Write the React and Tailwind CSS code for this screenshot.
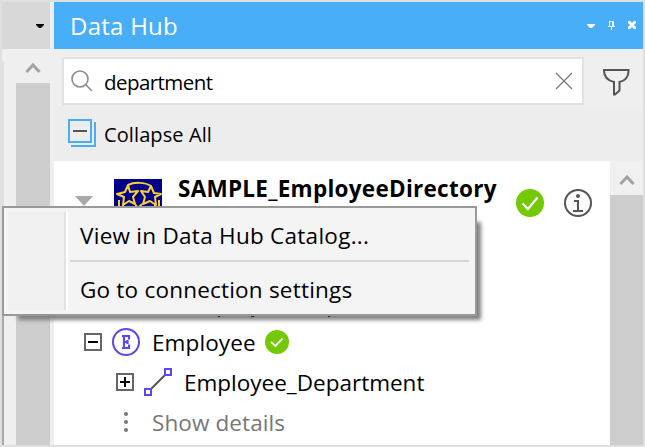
import React from "react";

const ArrowUp = () => (
  <svg width="16" height="12" viewBox="0 0 16 12" fill="none" stroke="#a3a3a3" strokeWidth="3">
    <path d="M1.500 10 8 3l6.500 7" />
  </svg>
);

const CheckBadge = ({ className, tick }) => (
  <svg className={className} viewBox="0 0 28 28" fill="none">
    <circle cx="14" cy="14" r="14" fill="#74c905" />
    <path d={tick} stroke="#fff" strokeWidth="2.200" />
  </svg>
);

function LeftPane() {
  return (
    <div className="flex w-[52px] shrink-0 flex-col bg-[#efefef]">
      <div className="flex h-[47px] w-12 items-center justify-end bg-[#d8d8d8] pr-1.5">
        <svg width="8" height="4" viewBox="0 0 8 4"><path d="M0 0h8v1L5 4H3L0 1z" fill="#000" /></svg>
      </div>
      <div className="flex min-h-0 flex-1">
        <div className="mt-3 flex w-0.5 flex-col justify-end bg-[#e0e0e0]">
          <div className="h-[129px] bg-[#a9a9a9]" />
        </div>
        <div className="ml-3 flex w-[34px] flex-col">
          <div className="flex h-[34px] items-center justify-center pt-1"><ArrowUp /></div>
          <div className="flex-1 bg-[#cdcdcd]" />
        </div>
      </div>
    </div>
  );
}

function TitleBar() {
  return (
    <div className="flex h-[47px] shrink-0 items-center bg-[#47aef7] pr-1.5 pl-4 text-white">
      <span className="flex-1 text-[24px] leading-[32px] tracking-[0.25px] whitespace-pre">Data Hub</span>
      <svg width="52" height="13" viewBox="0 0 52 13" fill="#fff">
        <path d="M2 5h8v1L7 9H5L2 6z" />
        <path fillRule="evenodd" d="M24 2h5v5h1v1h-3v3h-1V8h-3V7h1zm1 1v4h2V3z" />
        <path d="M43 2h2l2 2 2-2h2v2l-2 2 2 2v2h-2l-2-2-2 2h-2V8l2-2-2-2z" />
      </svg>
    </div>
  );
}

function SearchRow() {
  return (
    <div className="flex h-14 shrink-0 bg-[#efefef] pt-2 pl-2">
      <div className="flex h-12 w-[522px] items-center border-2 border-[#e2e2e2] bg-white pl-[7px]">
        <svg width="22" height="22" viewBox="0 0 22 22" fill="none" stroke="#8c8c8c" strokeWidth="1.600">
          <circle cx="9" cy="9" r="8" />
          <path d="m14.500 14.500 6.500 6.500" />
        </svg>
        <span className="ml-[11px] flex-1 pt-0.5 text-[20.5px] leading-[28px] tracking-[-0.55px] whitespace-pre text-black">department</span>
        <svg className="mr-[9px]" width="18" height="18" viewBox="0 0 18 18" stroke="#777" strokeWidth="1.200">
          <path d="m1 1 16 16M17 1 1 17" />
        </svg>
      </div>
      <svg className="mt-3 ml-[18px]" width="28" height="28" viewBox="0 0 28 28" fill="none" stroke="#555" strokeWidth="2">
        <path d="M2 1h24.500c.3 6-3 10.500-9 12v8.500L13 25.500h-1V13C5.500 11.500 1.800 7 2 1z" />
      </svg>
    </div>
  );
}

function Toolbar() {
  return (
    <div className="flex h-14 shrink-0 items-center bg-[#ededed] pl-[14px]">
      <svg width="28" height="28" viewBox="0 0 28 28" fill="none" stroke="#47aef7" strokeWidth="2">
        <path d="M1 1h22v22H1zM3 27h24V3" />
        <path d="M5 12h14" stroke="#555" />
      </svg>
      <span className="ml-2 pt-1 text-[20px] leading-[28px] tracking-[0.1px] whitespace-pre text-black">Collapse All</span>
    </div>
  );
}

function Tree() {
  return (
    <div className="flex min-h-0 flex-1 bg-white">
      <div className="flex w-[556px] flex-col overflow-hidden">
        <div className="flex h-[161px] shrink-0">
          <svg className="mt-[35px] ml-[21px]" width="18" height="10" viewBox="0 0 18 10"><path d="M0 0h18L9 10z" fill="#a9a9a9" /></svg>
          <svg className="mt-[18px] ml-[21px] bg-[#00008b]" width="48" height="48" viewBox="0 0 48 48" fill="none" stroke="#fbd12c" strokeWidth="2" strokeLinejoin="round">
            <path d="M14 6c6-3 17-3 23 1M5 21v12M9 25v8M45 21v12M41 25v8M21 25l3 4 4-4" />
            <path d="m14 6 2 7 8-1-5 6 2 7-6-3-6 4 1-8-7-3 8-2zM37 7l-3 6-7-1 4 6-2 7 7-3 6 4-1-8 6-3-7-1z" />
          </svg>
          <span className="mt-[12px] ml-4 w-[338px] text-[22.5px] leading-[32px] font-bold tracking-[0.27px] whitespace-pre">SAMPLE_EmployeeDirectory</span>
          <CheckBadge className="mt-7 h-7 w-7" tick="m6.500 14.500 5.500 5.500L21.500 8.500" />
          <svg className="mt-7 ml-5" width="28" height="28" viewBox="0 0 28 28" fill="none" stroke="#555" strokeWidth="2">
            <circle cx="14" cy="14" r="13" />
            <path d="M10 12h4v10M9 22h10" />
            <circle cx="14" cy="7" r="2" fill="#555" stroke="none" />
          </svg>
        </div>
        <div className="flex h-10 shrink-0 items-center pl-[30px]">
          <svg width="18" height="18" viewBox="0 0 18 18" fill="none" strokeWidth="2"><path d="M1 1h16v16H1z" stroke="#666" /><path d="M4 9h10" stroke="#000" /></svg>
          <svg className="ml-2.5" width="28" height="28" viewBox="0 0 28 28" fill="none" stroke="#5b48ec" strokeWidth="2">
            <circle cx="14" cy="14" r="13" />
            <path d="M10 8h7v3.500M10 20h7v-3.500M12 8v12M12 14h4m-.5-2v4" strokeWidth="2.200" />
          </svg>
          <span className="ml-3 w-[113px] pt-0.5 text-[22.5px] leading-[32px] tracking-[0.1px] whitespace-pre">Employee</span>
          <CheckBadge className="h-6 w-6" tick="m7 14 5 4.500L20.500 10" />
        </div>
        <div className="flex h-10 shrink-0 items-center pl-[62px]">
          <svg width="18" height="18" viewBox="0 0 18 18" fill="none" strokeWidth="2"><path d="M1 1h16v16H1z" stroke="#666" /><path d="M4 9h10M9 4v10" stroke="#000" /></svg>
          <svg className="ml-2.5" width="28" height="28" viewBox="0 0 28 28" fill="none" stroke="#5b48ec" strokeWidth="2">
            <path d="M7 21 21 7" stroke="#555" />
            <path d="M1 21h6v6H1zM21 1h6v6h-6z" />
          </svg>
          <span className="ml-3 pt-0.5 text-[22.5px] leading-[32px] whitespace-pre">Employee_Department</span>
        </div>
        <div className="flex h-10 shrink-0 items-center pl-[70px] text-[#777]">
          <svg width="4" height="20" viewBox="0 0 4 20" fill="#777"><circle cx="2" cy="2" r="2" /><circle cx="2" cy="10" r="2" /><circle cx="2" cy="18" r="2" /></svg>
          <span className="ml-6 pt-0.5 text-[22.5px] leading-[32px] tracking-[0.1px] whitespace-pre">Show details</span>
        </div>
      </div>
      <div className="flex flex-1 flex-col">
        <div className="flex h-[34px] items-center justify-center bg-[#f0f0f0] pt-1"><ArrowUp /></div>
        <div className="flex-1 bg-[#cdcdcd]" />
      </div>
    </div>
  );
}

function ContextMenu() {
  return (
    <div className="absolute top-[204px] left-0 flex h-[110px] w-[475px] border-2 border-[#999] bg-[#f4f4f4] p-1 shadow-[10px_10px_4px_-6px_#808080]">
      <div className="w-[60px] border-r-2 border-white">
        <div className="h-full border-r-2 border-[#e2e2e2] bg-[#f0f0f0]" />
      </div>
      <div className="ml-0.5 flex w-[399px] flex-col text-[22.5px] leading-[32px] whitespace-pre">
        <div className="h-12 pt-2 pl-2.5 tracking-[0.27px]">View in Data Hub Catalog...</div>
        <div className="h-0.5 bg-[#d7d7d7]" />
        <div className="pt-3 pl-2.5 tracking-[0.21px]">Go to connection settings</div>
      </div>
      {/* descender tips of the covered tree row */}
      <svg className="absolute top-[108px] left-[214px]" width="118" height="1" viewBox="0 0 118 1" fill="#222">
        <path d="M0 0h2v1H0zM33 0h3v1h-3zM110 0h2v1h-2z" />
      </svg>
    </div>
  );
}

export default function App() {
  return (
    <div className="relative flex h-[447px] w-[645px] overflow-hidden border-2 border-[#dfdfdf] bg-white font-['Open_Sans','Noto_Sans',sans-serif] text-black">
      <LeftPane />
      <div className="flex min-w-0 flex-1 flex-col">
        <TitleBar />
        <SearchRow />
        <Toolbar />
        <Tree />
      </div>
      <ContextMenu />
    </div>
  );
}
